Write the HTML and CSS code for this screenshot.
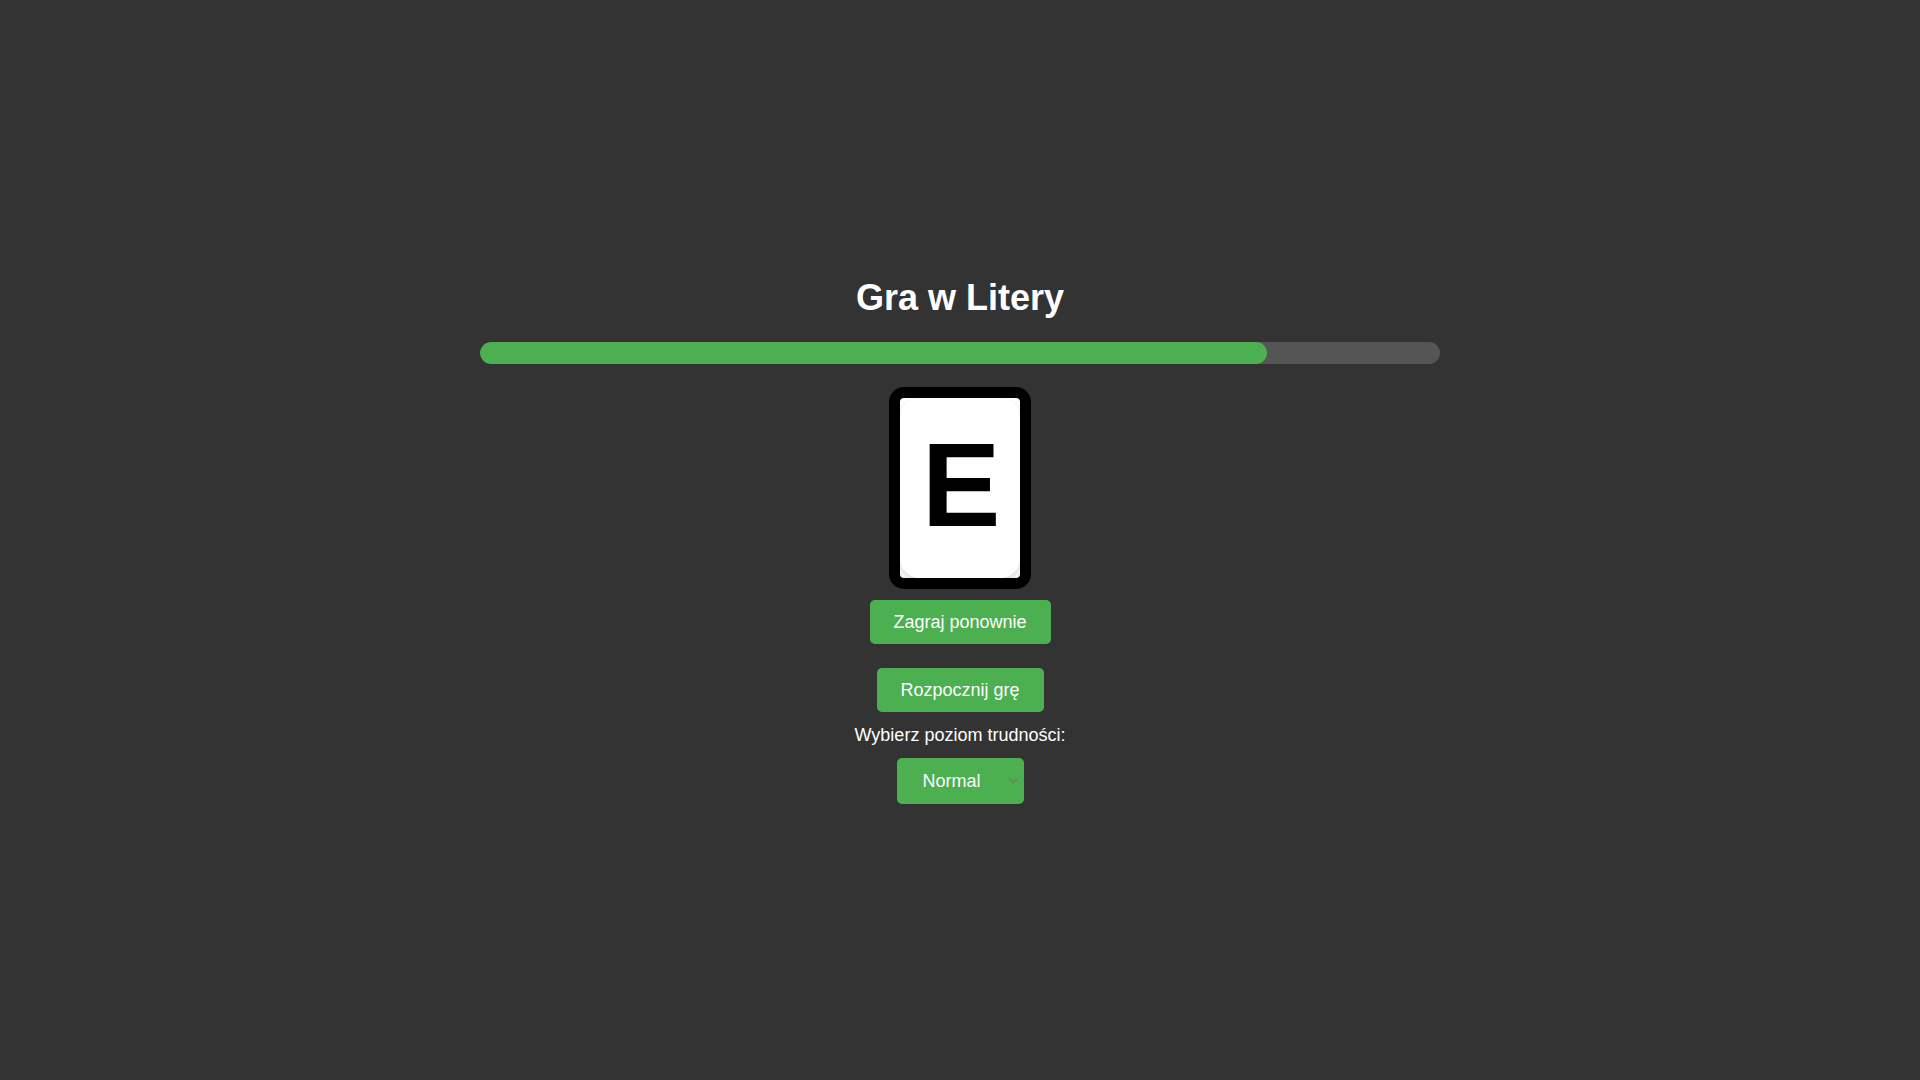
FILE: index.html
```html
<!DOCTYPE html>
<html lang="pl">
<head>
<meta charset="utf-8">
<title>Gra w Litery</title>
<link rel="stylesheet" href="styles.css">
</head>
<body>
<main class="game">
  <h1 class="title">Gra w Litery</h1>
  <div class="progress"><div class="progress-fill" style="width: 82%"></div></div>
  <div class="card">
    <div class="card-face"><span class="letter">E</span></div>
  </div>
  <button class="btn btn-again">Zagraj ponownie</button>
  <button class="btn btn-start">Rozpocznij grę</button>
  <label class="label" for="level">Wybierz poziom trudności:</label>
  <div class="select-wrap">
    <select id="level" class="select">
      <option>Normal</option>
    </select>
    <svg class="chevron" width="9" height="6" viewBox="0 0 9 6"><path d="M1 1 L4.5 4.5 L8 1" fill="none" stroke="#6f7a6f" stroke-width="1.4"/></svg>
  </div>
</main>
</body>
</html>
```

FILE: styles.css
```css
html, body {
  margin: 0;
  padding: 0;
  background: #333333;
  color: #ffffff;
  font-family: "Liberation Sans", Arial, sans-serif;
}
.game {
  height: 1080px;
  display: flex;
  flex-direction: column;
  align-items: center;
  padding-top: 277px;
  box-sizing: border-box;
}
.title {
  margin: 0;
  font-size: 36px;
  font-weight: bold;
  line-height: 42px;
}
.progress {
  margin-top: 23px;
  width: 960px;
  height: 22px;
  background: #555555;
  border-radius: 11px;
  overflow: hidden;
}
.progress-fill {
  height: 100%;
  background: #4caf50;
  border-radius: 11px;
}
.card {
  margin-top: 23px;
  width: 120px;
  height: 180px;
  border: 11px solid #000000;
  border-radius: 15px;
  background: #ffffff;
}
.card-face {
  width: 100%;
  height: 100%;
  border-radius: 20px;
  box-shadow: 0 4px 10px rgba(0, 0, 0, 0.16);
  display: flex;
  align-items: center;
  justify-content: center;
}
.letter {
  color: #000000;
  font-size: 118px;
  font-weight: bold;
  line-height: 1;
  margin-top: -6px;
  margin-left: 2px;
}
.btn {
  font-family: "Liberation Sans", Arial, sans-serif;
  font-size: 18px;
  color: #ffffff;
  background: #4caf50;
  border: none;
  border-radius: 5px;
  height: 44px;
  padding: 0 22px;
  cursor: pointer;
}
.btn-again {
  margin-top: 11px;
  width: 181px;
}
.btn-start {
  margin-top: 24px;
  width: 167px;
}
.label {
  margin-top: 13px;
  font-size: 18px;
  line-height: 21px;
}
.select-wrap {
  position: relative;
  margin-top: 12px;
  width: 127px;
  height: 46px;
}
.select {
  appearance: none;
  -webkit-appearance: none;
  width: 100%;
  height: 100%;
  font-family: "Liberation Sans", Arial, sans-serif;
  font-size: 18px;
  color: #ffffff;
  background: #4caf50;
  border: none;
  border-radius: 5px;
  padding: 0 0 0 26px;
  outline: none;
}
.chevron {
  position: absolute;
  right: 6px;
  top: 20px;
  pointer-events: none;
}
```
